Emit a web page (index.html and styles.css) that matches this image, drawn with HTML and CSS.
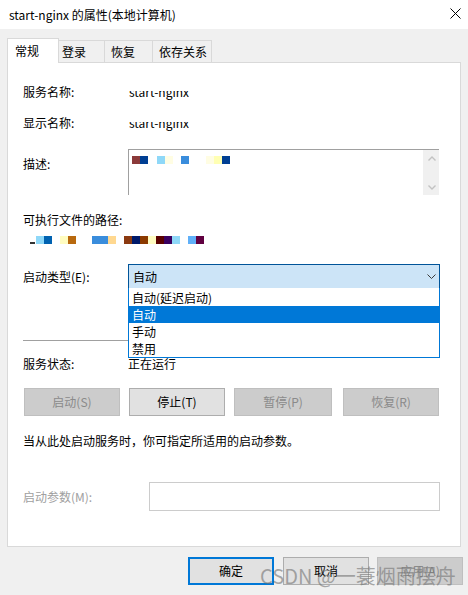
FILE: index.html
```html
<!DOCTYPE html>
<html>
<head>
<meta charset="utf-8">
<link rel="stylesheet" href="styles.css">
</head>
<body>
<div class="dialog">
  <div class="titlebar">
    <span class="title">start-nginx 的属性(本地计算机)</span>
    <svg class="close" width="11" height="11" viewBox="0 0 11 11"><path d="M0.5 0.5 L10.5 10.5 M10.5 0.5 L0.5 10.5" stroke="#000" stroke-width="1" fill="none"/></svg>
  </div>

  <div class="tabs">
    <div class="tab active">常规</div>
    <div class="tab t-login">登录</div>
    <div class="tab t-recover">恢复</div>
    <div class="tab t-deps">依存关系</div>
  </div>

  <div class="panel">
    <div class="row r1">
      <span class="lbl">服务名称:</span>
      <span class="val clipped">start-nginx</span>
    </div>
    <div class="row r2">
      <span class="lbl">显示名称:</span>
      <span class="val clipped">start-nginx</span>
    </div>
    <div class="row r-desc">
      <span class="lbl">描述:</span>
      <div class="descbox">
        <div class="desc-content">
          <div class="strip">
            <i class="sw c-rust"></i><i class="sw c-navy"></i><i class="gap9"></i>
            <i class="sw c-sky"></i><i class="sw c-cream"></i><i class="gap8"></i>
            <i class="sw c-blue"></i><i class="gap17"></i>
            <i class="sw c-cream"></i><i class="sw c-lemon"></i><i class="sw c-navy"></i>
          </div>
        </div>
        <div class="scrollbar">
          <svg width="8" height="5" viewBox="0 0 8 5"><path d="M0.5 4.5 L4 1 L7.5 4.5" fill="none" stroke="#c2c2c2" stroke-width="1.4"/></svg>
          <svg width="8" height="5" viewBox="0 0 8 5"><path d="M0.5 0.5 L4 4 L7.5 0.5" fill="none" stroke="#c2c2c2" stroke-width="1.4"/></svg>
        </div>
      </div>
    </div>

    <div class="row r-pathlbl">可执行文件的路径:</div>
    <div class="row r-path">
      <div class="strip">
        <i class="mark"></i>
        <i class="sw c-sky"></i><i class="sw c-cobalt"></i><i class="gap8"></i>
        <i class="sw c-pale"></i><i class="sw c-orange"></i><i class="gap16"></i>
        <i class="sw16 c-blue"></i><i class="sw c-peach"></i><i class="gap8"></i>
        <i class="sw c-brown"></i><i class="sw c-ink"></i><i class="sw c-brown2"></i>
        <i class="sw c-pale"></i><i class="sw c-maroon"></i><i class="sw c-purple"></i>
        <i class="sw c-sky"></i><i class="gap8"></i>
        <i class="sw c-azure"></i><i class="sw c-plum"></i>
      </div>
    </div>

    <div class="row r-combo">
      <span class="lbl">启动类型(E):</span>
      <div class="combo">
        <span>自动</span>
        <svg class="chev" width="9" height="5" viewBox="0 0 9 5"><path d="M0.5 0.5 L4.5 4.5 L8.5 0.5" fill="none" stroke="#3a3a3a" stroke-width="1"/></svg>
        <ul class="dropdown">
          <li>自动(延迟启动)</li>
          <li class="sel">自动</li>
          <li>手动</li>
          <li>禁用</li>
        </ul>
      </div>
    </div>

    <div class="sep"></div>

    <div class="row r-status">
      <span class="lbl">服务状态:</span>
      <span class="status">正在运行</span>
    </div>

    <div class="btnrow">
      <div class="btn dis b1">启动(S)</div>
      <div class="btn b2">停止(T)</div>
      <div class="btn dis b3">暂停(P)</div>
      <div class="btn dis b4">恢复(R)</div>
    </div>

    <div class="row r-hint">当从此处启动服务时，你可指定所适用的启动参数。</div>

    <div class="row r-param">
      <span class="lbl lbl-param">启动参数(M):</span>
      <div class="param-input"></div>
    </div>
  </div>

  <div class="footer">
    <div class="fbtn ok">确定</div>
    <div class="fbtn cancel">取消</div>
    <div class="fbtn dis apply">应用(A)</div>
  </div>

  <div class="watermark">CSDN @一蓑烟雨摆舟</div>
</div>
</body>
</html>
```

FILE: styles.css
```css
* { box-sizing: border-box; }
html, body { margin: 0; padding: 0; }
body {
  width: 468px;
  height: 595px;
  overflow: hidden;
  background: #f0f0f0;
  font-family: "Noto Sans CJK SC", "Noto Sans", sans-serif;
  font-size: 12px;
  color: #000;
}
.dialog { position: relative; width: 468px; height: 595px; }

.titlebar {
  height: 29px;
  background: #fff;
  display: flex;
  justify-content: space-between;
  padding: 0 7px 0 9px;
}
.title { line-height: 29px; }
.close { margin-top: 8px; }

.tabs {
  display: flex;
  align-items: flex-end;
  height: 24px;
  margin-top: 9px;
  padding-left: 7px;
}
.tab {
  height: 22px;
  line-height: 21px;
  background: #f0f0f0;
  border-top: 1px solid #d9d9d9;
  border-right: 1px solid #d9d9d9;
  white-space: nowrap;
}
.tab.active {
  position: relative;
  z-index: 1;
  height: 25px;
  margin-bottom: -1px;
  width: 52px;
  padding-left: 7px;
  line-height: 23px;
  background: #fff;
  border-left: 1px solid #d9d9d9;
}
.t-login { width: 46px; padding-left: 3px; }
.t-recover { width: 48px; padding-left: 6px; }
.t-deps { width: 59px; padding-left: 6px; }

.panel {
  position: relative;
  margin-left: 7px;
  width: 454px;
  height: 485px;
  background: #fff;
  border: 1px solid #d9d9d9;
  padding-left: 15px;
}

.row { display: flex; align-items: center; height: 20px; line-height: 20px; }
.lbl { width: 105px; flex: none; }
.val { margin-left: 1px; }
.clipped { display: block; height: 20px; clip-path: inset(9px 0 0 0); }

.r1 { margin-top: 19px; }
.r2 { margin-top: 11px; }

.r-desc { margin-top: 16px; height: 46px; align-items: flex-start; }
.r-desc .lbl { padding-top: 5px; }
.descbox {
  width: 311px;
  height: 46px;
  display: flex;
  border-top: 1px solid #a0a0a0;
  border-left: 1px solid #a0a0a0;
}
.desc-content { flex: 1; padding: 6px 0 0 3px; }
.scrollbar {
  width: 16px;
  flex: none;
  background: #f0f0f0;
  display: flex;
  flex-direction: column;
  align-items: center;
  justify-content: space-between;
  padding: 6px 0 5px 1px;
}
.scrollbar svg { display: block; }

.strip { display: flex; align-items: center; height: 8px; }
.strip i { display: block; height: 8px; flex: none; }
.sw { width: 8px; }
.sw16 { width: 16px; }
.gap8 { width: 8px; }
.gap9 { width: 9px; }
.gap16 { width: 16px; }
.gap17 { width: 17px; }
.strip .mark { width: 5px; height: 2px; margin: 6px 1px 0 0; background: #333; }

.c-rust { background: #8b3a3a; }
.c-navy { background: #003f93; }
.c-sky { background: #8fd8f8; }
.c-cream { background: #fffde3; }
.c-blue { background: #3a8ddc; }
.c-lemon { background: #ffffb3; }
.c-cobalt { background: #0062b1; }
.c-pale { background: #fffcc0; }
.c-orange { background: #b8690e; }
.c-peach { background: #ffd890; }
.c-brown { background: #8b3a10; }
.c-ink { background: #001a6a; }
.c-brown2 { background: #8b3a00; }
.c-maroon { background: #5a0000; }
.c-purple { background: #3a0060; }
.c-azure { background: #60b0f8; }
.c-plum { background: #600040; }

.r-pathlbl { margin-top: 15px; }
.r-path { padding-left: 7px; }

.r-combo { margin-top: 14px; height: 25px; }
.combo {
  position: relative;
  width: 312px;
  height: 25px;
  background: #cce4f7;
  border: 1px solid #005499;
  display: flex;
  align-items: center;
  justify-content: space-between;
  padding: 0 3px 0 4px;
  line-height: 22px;
}
.chev { display: block; }
.dropdown {
  position: absolute;
  z-index: 5;
  top: 100%;
  left: -1px;
  width: 312px;
  margin: 0;
  padding: 1px 0 0;
  list-style: none;
  background: #fff;
  border: 1px solid #0078d7;
  border-top: none;
}
.dropdown li { height: 17px; line-height: 17px; padding-left: 3px; }
.dropdown li.sel { background: #0078d7; color: #fff; }

.sep { margin-top: 51px; width: 416px; height: 1px; background: #a0a0a0; }

.r-status { margin-top: 13px; }

.btnrow { display: flex; margin-top: 14px; height: 28px; }
.btn {
  height: 28px;
  width: 96px;
  line-height: 26px;
  text-align: center;
  background: #e1e1e1;
  border: 1px solid #adadad;
}
.btn.dis { background: #cccccc; border-color: #bfbfbf; color: #8a8a8a; }
.b1 { margin-left: 1px; }
.b2 { margin-left: 9px; }
.b3 { margin-left: 9px; width: 98px; }
.b4 { margin-left: 11px; }

.r-hint { margin-top: 15px; }

.r-param { margin-top: 31px; height: 29px; }
.lbl-param { width: 126px; color: #a0a0a0; }
.param-input { width: 291px; height: 29px; border: 1px solid #cccccc; background: #fff; }

.footer { display: flex; margin-top: 10px; padding-left: 188px; }
.fbtn {
  width: 86px;
  height: 28px;
  line-height: 26px;
  text-align: center;
  background: #e1e1e1;
  border: 1px solid #adadad;
}
.fbtn.ok { border: 2px solid #0078d7; line-height: 24px; }
.fbtn.cancel { margin-left: 9px; }
.fbtn.apply { margin-left: 8px; }
.fbtn.dis { background: #cccccc; border-color: #bfbfbf; color: #8a8a8a; }

.watermark {
  position: absolute;
  left: 260px;
  top: 566px;
  z-index: 10;
  font-size: 20px;
  line-height: 20px;
  color: rgba(115, 115, 115, 0.6);
  white-space: nowrap;
  letter-spacing: 0;
}
```
